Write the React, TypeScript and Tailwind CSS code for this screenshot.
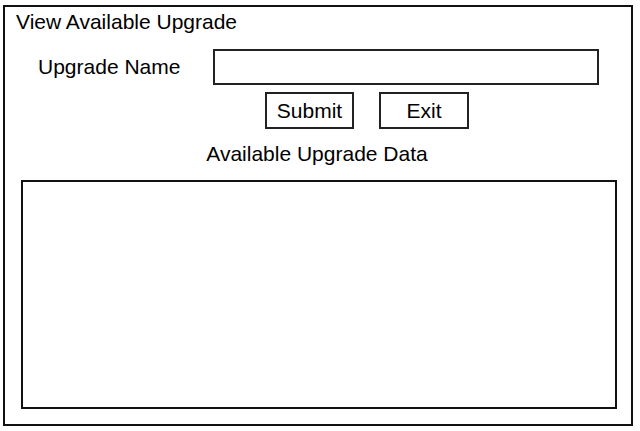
import React from "react";

export default function App() {
  return (
    <div className="w-[640px] h-[431px] bg-white pt-[5px] pl-[3px] font-['Liberation_Sans',Arial,sans-serif] text-[21px] text-black">
      <div className="w-[630px] h-[421px] border-2 border-[#111] flex flex-col">
        <div className="mt-[3px] ml-[11px] leading-[24px]">View Available Upgrade</div>
        <div className="flex items-center mt-[15px]">
          <span className="ml-[33px] w-[175px] leading-[24px]">Upgrade Name</span>
          <input className="w-[386px] h-[36px] border-2 border-[#222] outline-none px-2" />
        </div>
        <div className="flex mt-[7px] ml-[260px] gap-[25px]">
          <button className="w-[89px] h-[37px] border-2 border-[#222] leading-[24px]">Submit</button>
          <button className="w-[90px] h-[37px] border-2 border-[#222] leading-[24px]">Exit</button>
        </div>
        <div className="mt-[13px] ml-[-2px] text-center leading-[24px]">Available Upgrade Data</div>
        <div className="mt-[14px] ml-[16px] w-[596px] h-[229px] border-2 border-[#111]" />
      </div>
    </div>
  );
}
